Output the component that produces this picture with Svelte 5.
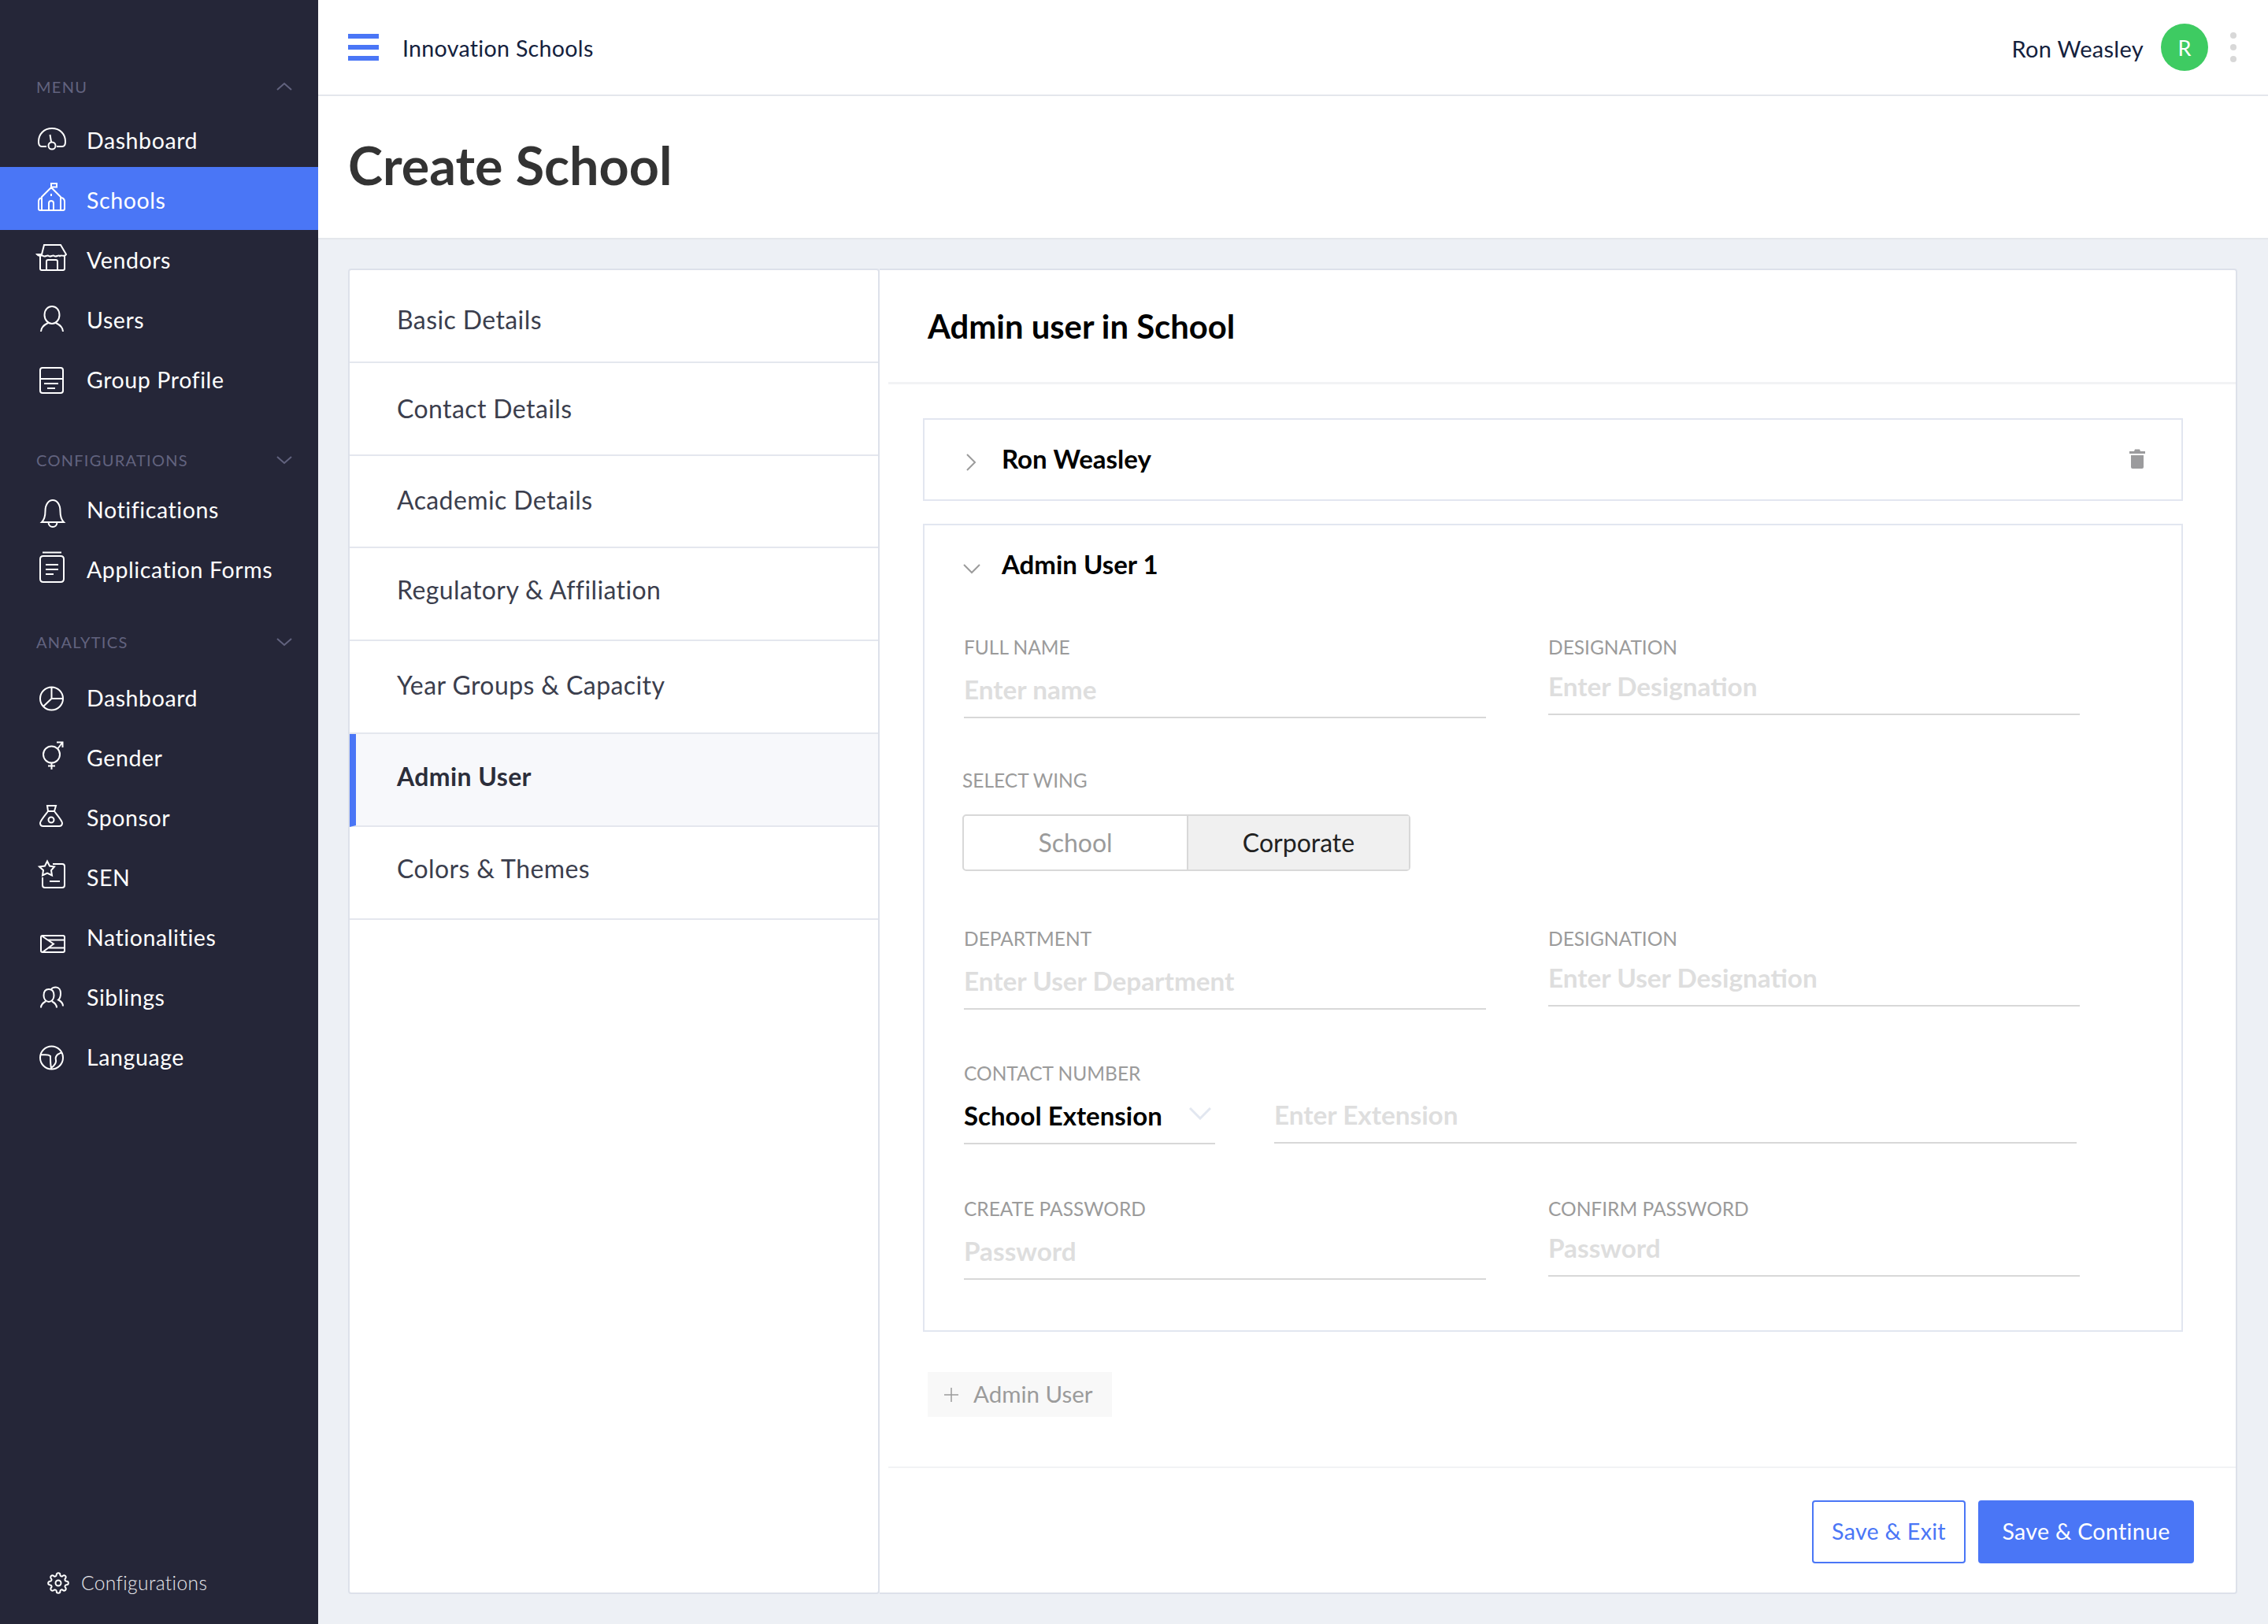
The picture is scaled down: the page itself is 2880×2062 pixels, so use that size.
<script>
  const c = (x, y, r) => `M${x - r} ${y}a${r} ${r} 0 1 0 ${2 * r} 0a${r} ${r} 0 1 0 ${-2 * r} 0`;
  const icons = {
    gauge: 'M15 30H9C6 30 5 27 5 24C5 14 12 7 22 7C32 7 39 14 39 24C39 27 38 30 35 30H28' + c(22, 29, 4.5) + 'M19.5 15L21 24',
    school: 'M9 19Q5 20 5 24V33Q5 35 7 35H36Q38 35 38 33V24Q38 20 34 19M9 35V18L21 6L33 18V35M18 35V26Q18 23 21 23Q24 23 24 26V35M21 14V17M21 6V1H28V5.500H21',
    store: 'M9 15L12 3H33L40 15C38 19 34 15 32 17C30 15 27 19 25 17C23 15 20 19 18 17C16 15 13 19 11 17C9 15 6 19 3 15ZM7 17V33Q7 35 9 35H36Q38 35 38 33V17M15 35V24Q15 22 17 22H27Q29 22 29 24V35',
    user: 'M12.500 16C12.500 9 17 5 22 5C27 5 31.500 9 31.500 16C31.500 22 27 27 22 27C17 27 12.500 22 12.500 16ZM8 37C8 31 13 28 17 26M36 37C36 31 31 28 27 26',
    profile: 'M10 7H33Q36 7 36 10V36Q36 39 33 39H10Q7 39 7 36V10Q7 7 10 7ZM7 21H36M12 27H30M16 33H26',
    bell: 'M9 38H37C33 34 32.500 30 32.500 24C32.500 15 28 10 23 10C18 10 13.500 15 13.500 24C13.500 30 13 34 9 38ZM17.500 38C17.500 46 28.500 46 28.500 38',
    forms: 'M10 0.500H34M11 5H33Q37 5 37 9V34Q37 38 33 38H11Q7 38 7 34V9Q7 5 11 5ZM14 16H30M14 22H30M14 28H24',
    pie: c(21.500, 23, 14.500) + 'M21.500 9V23H36M21.500 23L11 33',
    gender: c(21.500, 18, 10.500) + 'M29 11L35 3M28 2.500H35.500V9M21.500 28.500V37M17 32.500H26',
    bag: 'M16 7H27L25 14C28 18 35 26 35 29C35 32 33 33 31 33H11C9 33 7 32 7 29C7 26 14 18 17 14ZM17 14H25' + c(21, 25, 3.500),
    sen: 'M23 5H35Q38 5 38 8V32Q38 35 35 35H13Q10 35 10 32V22M19 27H32M16 1.500L19 7.500L25 8.500L21 13L22 19.500L16 16.500L10 19.500L11 13L6 8.500L13 7.500Z',
    flag: 'M10 20H36Q38 20 38 22V39Q38 41 36 41H10Q8 41 8 39V22Q8 20 10 20ZM10 21L24 30.500L10 41M17 25.500H38M17 35.500H38',
    siblings: 'M11.500 20C11.500 15 14 12 18 12C22 12 24.500 15 24.500 20C24.500 24 22 28 18 28C14 28 11.500 24 11.500 20ZM8 35.500C8 31 11 29 14 27.500M28 35.500C28 31 25 29 22 27.500M21 12.500C22 10 24 9.500 27 9.500C31 9.500 33 13 33 17C33 21 32 24 30 25.500C33 27 36 29 36 33.500',
    globe: c(21.500, 23, 14.500) + 'M8 19C12 20 17 18 20 21C20 26 20 32 21 36C25 33 28 30 27 26C26 23 27 21 29 19C31 18 33 17 34 16'
  };
  const groups = [
    { cls: 'g1', label: 'MENU', up: true, items: [
      ['Dashboard', 'gauge'], ['Schools', 'school', true], ['Vendors', 'store'], ['Users', 'user'], ['Group Profile', 'profile'] ] },
    { cls: 'g2', label: 'CONFIGURATIONS', items: [['Notifications', 'bell'], ['Application Forms', 'forms']] },
    { cls: 'g3', label: 'ANALYTICS', items: [
      ['Dashboard', 'pie'], ['Gender', 'gender'], ['Sponsor', 'bag'], ['SEN', 'sen'], ['Nationalities', 'flag'], ['Siblings', 'siblings'], ['Language', 'globe'] ] }
  ];
  const steps = ['Basic Details', 'Contact Details', 'Academic Details', 'Regulatory & Affiliation', 'Year Groups & Capacity', 'Admin User', 'Colors & Themes'];
</script>

<div class="app">
  <aside class="side">
    {#each groups as g}
      <section class={g.cls}>
        <div class="gh">
          <span>{g.label}</span>
          <svg width="20" height="12" viewBox="0 0 20 12" class="sc"><path d={g.up ? 'M1 10L10 2L19 10' : 'M1 2L10 10L19 2'} /></svg>
        </div>
        {#each g.items as it}
          <div class="mi" class:on={it[2]}>
            <svg width="44" height="44" viewBox="0 0 44 44" class="mic"><path d={icons[it[1]]} /></svg>
            <span>{it[0]}</span>
          </div>
        {/each}
      </section>
    {/each}
    <div class="cfg">
      <svg width="28" height="28" viewBox="0 0 24 24" class="gear">
        <circle cx="12" cy="12" r="3" />
        <path d="M19.4 15a1.65 1.65 0 0 0 .33 1.82l.06.06a2 2 0 0 1 0 2.83 2 2 0 0 1-2.83 0l-.06-.06a1.65 1.65 0 0 0-1.82-.33 1.65 1.65 0 0 0-1 1.51V21a2 2 0 0 1-2 2 2 2 0 0 1-2-2v-.09A1.65 1.65 0 0 0 9 19.4a1.65 1.65 0 0 0-1.82.33l-.06.06a2 2 0 0 1-2.83 0 2 2 0 0 1 0-2.83l.06-.06a1.65 1.65 0 0 0 .33-1.82 1.65 1.65 0 0 0-1.51-1H3a2 2 0 0 1-2-2 2 2 0 0 1 2-2h.09A1.65 1.65 0 0 0 4.6 9a1.65 1.65 0 0 0-.33-1.82l-.06-.06a2 2 0 0 1 0-2.83 2 2 0 0 1 2.83 0l.06.06a1.65 1.65 0 0 0 1.82.33H9a1.65 1.65 0 0 0 1-1.51V3a2 2 0 0 1 2-2 2 2 0 0 1 2 2v.09a1.65 1.65 0 0 0 1 1.51 1.65 1.65 0 0 0 1.82-.33l.06-.06a2 2 0 0 1 2.83 0 2 2 0 0 1 0 2.83l-.06.06a1.65 1.65 0 0 0-.33 1.82V9a1.65 1.65 0 0 0 1.51 1H21a2 2 0 0 1 2 2 2 2 0 0 1-2 2h-.09a1.65 1.65 0 0 0-1.51 1z" />
      </svg>
      <span>Configurations</span>
    </div>
  </aside>

  <div class="main">
    <header class="top">
      <div class="burger"><i></i><i></i><i></i></div>
      <span class="org">Innovation Schools</span>
      <span class="uname">Ron Weasley</span>
      <span class="avatar">R</span>
      <div class="dots"><i></i><i></i><i></i></div>
    </header>
    <div class="ph"><h1>Create School</h1></div>
    <div class="content">
      <nav class="steps">
        {#each steps as s, i}
          <div class="step" class:cur={i === 5}>{s}</div>
        {/each}
      </nav>
      <div class="panel">
        <h2>Admin user in School</h2>
        <div class="card c1">
          <svg class="chev" width="16" height="24" viewBox="0 0 16 24"><path d="M3 2L13 12L3 22" /></svg>
          <span class="ct">Ron Weasley</span>
          <svg class="trash" width="20" height="26" viewBox="0 0 20 26"><path d="M0 3H6L7 0.500H13L14 3H20V6H0ZM2 8H18V23Q18 25 16 25H4Q2 25 2 23Z" /></svg>
        </div>
        <div class="card c2">
          <div class="c2h">
            <svg class="chev" width="24" height="16" viewBox="0 0 24 16"><path d="M2 3L12 13L22 3" /></svg>
            <span class="ct">Admin User 1</span>
          </div>
          <div class="row r1">
            <div class="f fl"><label for="a">FULL NAME</label><div id="a" class="inp">Enter name</div></div>
            <div class="f fr"><label for="b">DESIGNATION</label><div id="b" class="inp tight">Enter Designation</div></div>
          </div>
          <div class="wl">SELECT WING</div>
          <div class="toggle"><span class="t0">School</span><span class="t1">Corporate</span></div>
          <div class="row r2">
            <div class="f fl"><label for="c">DEPARTMENT</label><div id="c" class="inp">Enter User Department</div></div>
            <div class="f fr"><label for="d">DESIGNATION</label><div id="d" class="inp tight">Enter User Designation</div></div>
          </div>
          <div class="row r3">
            <div class="f"><label for="e">CONTACT NUMBER</label>
              <div class="pair">
                <div id="e" class="inp sel">School Extension
                  <svg width="28" height="16" viewBox="0 0 28 16"><path d="M1 1L14 14L27 1" /></svg>
                </div>
                <div class="inp ext">Enter Extension</div>
              </div>
            </div>
          </div>
          <div class="row r4">
            <div class="f fl"><label for="g">CREATE PASSWORD</label><div id="g" class="inp">Password</div></div>
            <div class="f fr"><label for="h">CONFIRM PASSWORD</label><div id="h" class="inp tight">Password</div></div>
          </div>
        </div>
        <div class="add"><svg width="18" height="18" viewBox="0 0 18 18"><path d="M9 0V18M0 9H18" /></svg><span>Admin User</span></div>
        <div class="foot">
          <button class="b0">Save &amp; Exit</button>
          <button class="b1">Save &amp; Continue</button>
        </div>
      </div>
    </div>
  </div>
</div>

<style>
  :global(body) { margin: 0; background: #edf0f5; }
  .app { display: flex; min-height: 2062px; font-family: Lato, "Open Sans", sans-serif; color: #222; }
  .side { width: 404px; flex: none; background: #252638; display: flex; flex-direction: column; color: #fff; }
  .g1 { padding-top: 94px; }
  .g1 .gh { margin-bottom: 14px; }
  .g2 { margin-top: 48px; }
  .g2 .gh { margin-bottom: 9px; }
  .g3 { margin-top: 38px; }
  .g3 .gh { margin-bottom: 17px; }
  .gh { height: 32px; display: flex; align-items: center; justify-content: space-between; padding: 0 33px 0 46px; color: #62637f; font-size: 20px; letter-spacing: 1.300px; }
  .sc { fill: none; stroke: #62637f; stroke-width: 2; }
  .mi { height: 76px; display: flex; align-items: center; font-size: 28.500px; letter-spacing: 0.600px; }
  .mi span { padding-bottom: 1px; }
  .mi.on { background: #4a76f6; height: 80px; margin-top: -4px; padding-top: 4px; box-sizing: border-box; }
  .mic { margin-left: 44px; margin-right: 22px; fill: none; stroke: #fff; stroke-width: 2; overflow: visible; flex: none; }
  .cfg { margin-top: auto; margin-bottom: 38px; padding-left: 60px; display: flex; align-items: center; font-size: 24.500px; color: #e8e8ec; font-weight: 300; letter-spacing: 0.400px; height: 28px; }
  .cfg span { padding-bottom: 2px; }
  .gear { fill: none; stroke: #fff; stroke-width: 1.700; margin-right: 15px; }

  .main { flex: 1; display: flex; flex-direction: column; min-width: 0; }
  .top { height: 120px; background: #fff; border-bottom: 2px solid #e4e7ec; display: flex; align-items: center; padding: 0 40px 0 38px; }
  .burger { width: 39px; display: flex; flex-direction: column; gap: 8px; }
  .burger i { height: 6px; background: #4a76f6; display: block; }
  .org { margin-left: 30px; font-size: 28.600px; color: #14213d; letter-spacing: 0.300px; padding-top: 2px; }
  .uname { margin-left: auto; font-size: 29px; color: #14213d; letter-spacing: 0.300px; padding-top: 2px; }
  .avatar { width: 60px; height: 60px; margin-left: 22px; border-radius: 50%; background: #3ecb62; color: #fff; font-size: 27px; display: flex; align-items: center; justify-content: center; }
  .dots { margin-left: 28px; display: flex; flex-direction: column; gap: 7px; }
  .dots i { width: 8px; height: 8px; border-radius: 50%; background: #d8d8d8; display: block; }
  .ph { height: 180px; background: #fff; border-bottom: 2px solid #e4e7ec; display: flex; align-items: center; padding-left: 38px; }
  h1 { margin: 0 0 6px; font-size: 66.500px; font-weight: 700; color: #333; }
  .content { flex: 1; display: flex; padding: 37px 39px 38px 38px; }
  .steps { width: 671px; flex: none; background: #fff; border: 2px solid #dde1ea; border-radius: 4px; }
  .step { height: 117.800px; box-sizing: border-box; border-bottom: 2px solid #e4e7ee; display: flex; align-items: center; padding-left: 60px; font-size: 32px; letter-spacing: 0.400px; color: #3b3e4d; }
  .step:nth-child(1) { padding-top: 10px; }
  .step:nth-child(3) { padding-bottom: 4px; }
  .step:nth-child(4) { padding-bottom: 11px; }
  .step:nth-child(5) { padding-bottom: 6px; }
  .step:nth-child(6) { padding-bottom: 8px; }
  .step:nth-child(7) { padding-bottom: 10px; }
  .step.cur { background: #f7f8fb; border-left: 8px solid #4a76f6; padding-left: 52px; font-weight: 700; color: #2c2e3a; }
  .panel { flex: 1; background: #fff; border: 2px solid #dde1ea; border-left: 0; border-radius: 0 4px 4px 0; display: flex; flex-direction: column; }
  h2 { margin: 0 0 0 11px; height: 142px; box-sizing: content-box; padding-left: 50px; display: flex; align-items: center; border-bottom: 3px solid #f2f3f5; font-size: 41.800px; font-weight: 700; color: #000; }
  .card { margin: 43px 67px 0 55px; border: 2px solid #e2e6f0; }
  .c1 { height: 101px; display: flex; align-items: center; padding-left: 47px; padding-right: 46px; }
  .chev { fill: none; stroke: #9b9b9b; stroke-width: 2; flex: none; }
  .c1 .chev { margin-left: 4px; margin-top: 6px; }
  .ct { font-size: 33px; font-weight: 700; color: #000; }
  .c1 .ct { margin-left: 31px; padding-bottom: 3px; }
  .trash { margin-left: auto; margin-bottom: 2px; fill: #9b9b9d; }
  .c2 { margin-top: 29px; padding: 0 0 64px 50px; }
  .c2h { height: 98px; display: flex; align-items: center; }
  .c2h .chev { margin-left: -2px; margin-top: 12px; }
  .c2h .ct { margin-left: 26px; }
  .row { display: flex; }
  .r1 { margin-top: 42px; }
  .r2 { margin-top: 71px; }
  .r3 { margin-top: 66px; }
  .r4 { margin-top: 67px; }
  .f label { display: block; height: 30px; line-height: 30px; font-size: 24.500px; color: #9b9b9b; }
  .fl { width: 663px; }
  .fr { width: 675px; margin-left: 79px; }
  .inp { padding: 18px 0 15px; line-height: 40px; font-size: 33.300px; color: #dedede; font-weight: 700; border-bottom: 2px solid #d8d8d8; }
  .inp.tight { padding-top: 14px; }
  .pair { display: flex; align-items: flex-start; }
  .sel { width: 319px; color: #000; display: flex; align-items: center; justify-content: space-between; font-size: 33px; }
  .sel svg { fill: none; stroke: #e2e7f0; stroke-width: 3; margin-right: 5px; margin-top: -4px; }
  .ext { width: 1019px; margin-left: 75px; padding-top: 17px; }
  .wl { margin-top: 64px; margin-left: -2px; height: 30px; line-height: 30px; font-size: 24.500px; color: #9b9b9b; }
  .toggle { display: flex; margin-top: 28px; margin-left: -2px; width: 569px; height: 72px; box-sizing: border-box; border: 2px solid #d8d8d8; border-radius: 5px; font-size: 32px; }
  .toggle span { display: flex; align-items: center; justify-content: center; padding-bottom: 2px; }
  .t0 { width: 283px; color: #9b9b9b; border-right: 2px solid #d8d8d8; }
  .t1 { flex: 1; background: #f0f0f0; color: #222; }
  .add { margin: 51px 0 0 61px; width: 234px; height: 57px; background: #f8f8f8; display: flex; align-items: center; font-size: 29.500px; color: #9b9b9b; }
  .add svg { fill: none; stroke: #9b9b9b; stroke-width: 1.500; margin-left: 21px; margin-right: 19px; }
  .add span { padding-bottom: 2px; }
  .foot { margin: 63px 0 0 11px; border-top: 2px solid #f2f3f5; padding: 41px 53px 0 0; display: flex; justify-content: flex-end; gap: 16px; }
  button { height: 80px; box-sizing: border-box; border-radius: 4px; font: inherit; font-size: 28.600px; letter-spacing: 0.300px; border: 2px solid #4a76f6; padding: 0 0 2px; }
  .b0 { width: 195px; background: #fff; color: #4a76f6; }
  .b1 { width: 274px; background: #4a76f6; color: #fff; }
</style>
